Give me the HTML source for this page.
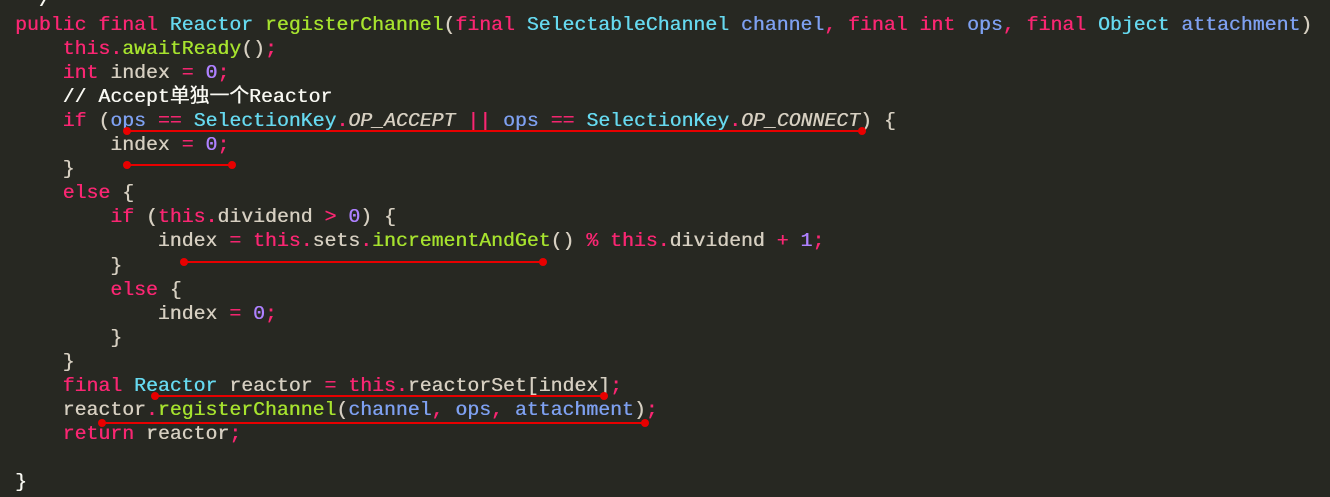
<!DOCTYPE html>
<html><head><meta charset="utf-8"><style>
body{margin:0;background:#272822;width:1330px;height:497px;overflow:hidden;position:relative}
pre{margin:0;position:absolute;left:15px;top:-11px;font-family:"Liberation Mono","Noto Sans CJK SC",monospace;font-size:19.83px;line-height:24.05px;color:#d6cfc1;text-shadow:0.4px 0 0 currentColor}
.k{color:#f92672}.t{color:#66d9ef}.f{color:#a6e22e}.n{color:#ae81ff}.p{color:#7ea0f0}.w{color:#f8f8f2}.i{font-style:italic}
.r{position:absolute;height:2px;background:#e80000}
.r:before,.r:after{content:"";position:absolute;top:-3px;width:8px;height:8px;border-radius:50%;background:#e80000}
.r:before{left:-4px}.r:after{right:-4px}
</style></head><body>
<pre><span class="w"> */</span>
<span class="k">public final</span> <span class="t">Reactor</span> <span class="f">registerChannel</span>(<span class="k">final</span> <span class="t">SelectableChannel</span> <span class="p">channel</span><span class="k">,</span> <span class="k">final</span> <span class="k">int</span> <span class="p">ops</span><span class="k">,</span> <span class="k">final</span> <span class="t">Object</span> <span class="p">attachment</span>)
    <span class="k">this.</span><span class="f">awaitReady</span>()<span class="k">;</span>
    <span class="k">int</span> index <span class="k">=</span> <span class="n">0</span><span class="k">;</span>
    <span class="w">// Accept单独一个Reactor</span>
    <span class="k">if</span> (<span class="p">ops</span> <span class="k">==</span> <span class="t">SelectionKey</span><span class="k">.</span><span class="i">OP_ACCEPT</span> <span class="k">||</span> <span class="p">ops</span> <span class="k">==</span> <span class="t">SelectionKey</span><span class="k">.</span><span class="i">OP_CONNECT</span>) {
        index <span class="k">=</span> <span class="n">0</span><span class="k">;</span>
    }
    <span class="k">else</span> {
        <span class="k">if</span> (<span class="k">this.</span>dividend <span class="k">&gt;</span> <span class="n">0</span>) {
            index <span class="k">=</span> <span class="k">this.</span>sets<span class="k">.</span><span class="f">incrementAndGet</span>() <span class="k">%</span> <span class="k">this.</span>dividend <span class="k">+</span> <span class="n">1</span><span class="k">;</span>
        }
        <span class="k">else</span> {
            index <span class="k">=</span> <span class="n">0</span><span class="k">;</span>
        }
    }
    <span class="k">final</span> <span class="t">Reactor</span> reactor <span class="k">=</span> <span class="k">this.</span>reactorSet[index]<span class="k">;</span>
    reactor<span class="k">.</span><span class="f">registerChannel</span>(<span class="p">channel</span><span class="k">,</span> <span class="p">ops</span><span class="k">,</span> <span class="p">attachment</span>)<span class="k">;</span>
    <span class="k">return</span> reactor<span class="k">;</span>

<span class="w">}</span></pre>
<div class="r" style="left:127px;top:130px;width:735px"></div>
<div class="r" style="left:127px;top:164px;width:105px"></div>
<div class="r" style="left:184px;top:261px;width:359px"></div>
<div class="r" style="left:155px;top:395px;width:449px"></div>
<div class="r" style="left:102px;top:422px;width:543px"></div>
</body></html>
